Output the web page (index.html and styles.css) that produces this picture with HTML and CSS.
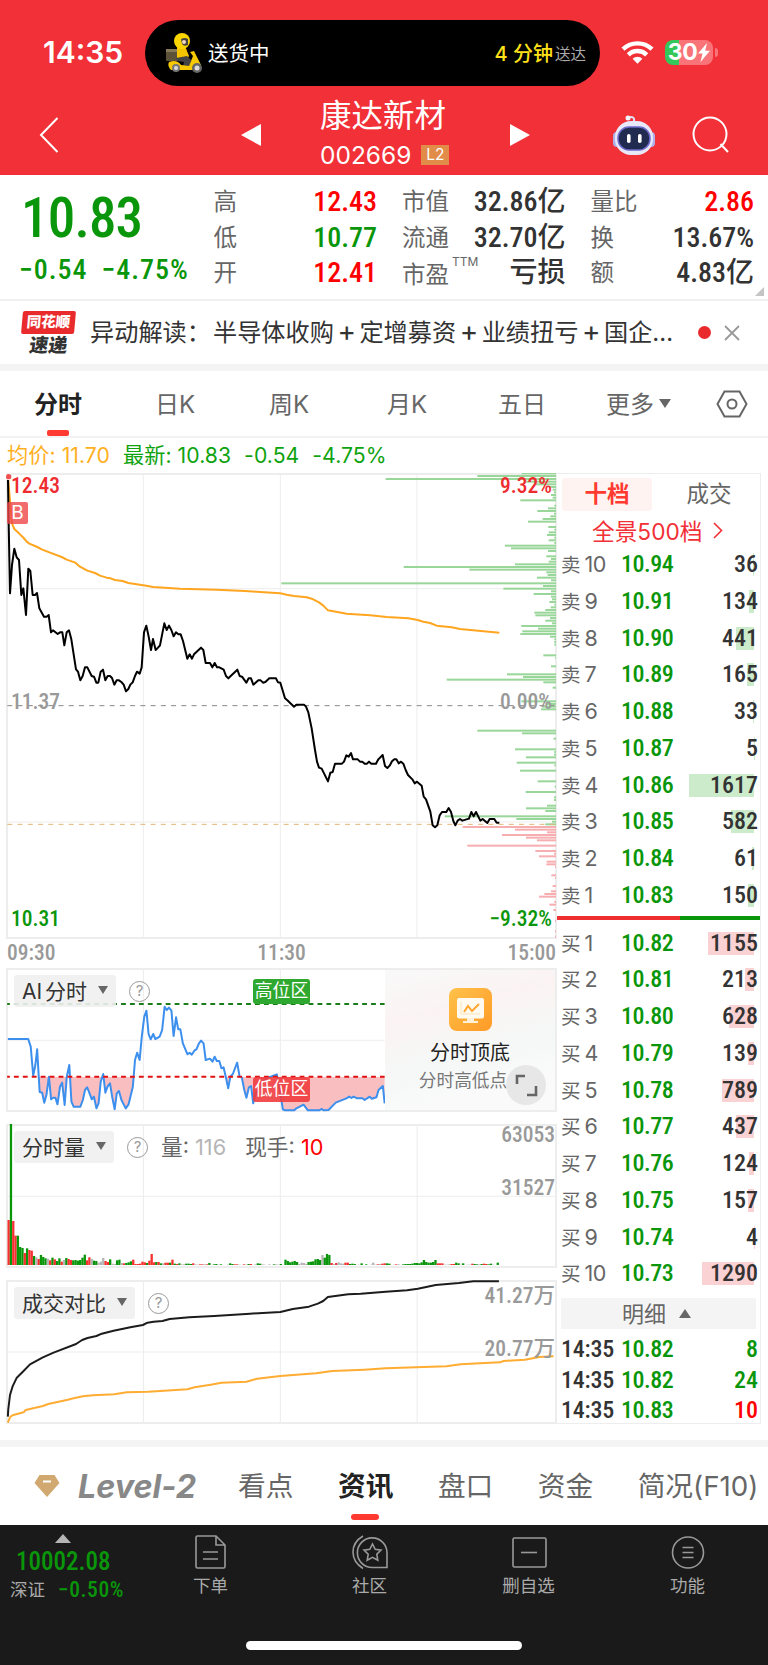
FILE: index.html
```
<!doctype html>
<html lang="zh-CN">
<head>
    <meta charset="UTF-8">
    <meta name="viewport" content="width=device-width, initial-scale=1.0">
    <title>康达新材 002669</title>
    <link rel="stylesheet" href="styles.css">
</head>
<body>

    <header class="header">
        <div class="status">
            <div class="status__time">14:35</div>
            <div class="island">
                <svg class="island__rider" width="38" height="40" viewBox="0 0 38 40">
                    <rect x="1" y="16" width="13" height="12" rx="1" fill="#5c5238"/>
                    <rect x="1" y="16" width="13" height="3" fill="#85795a"/>
                    <path d="M12 14l8-1 4 10-3 5-9-2z" fill="#f5c400"/>
                    <path d="M11 25l11-2 4 4-2 7-6-1 1-4-7-1z" fill="#444"/>
                    <path d="M4 29q8-3 12 3l8 1 4-10-3-4 4-1 7 14-8 5H6q-4-4-2-8z" fill="#f8c800"/>
                    <circle cx="17" cy="8" r="8" fill="#fbd500"/>
                    <path d="M16 6q4-2 7 0v6q-4 2-6-1z" fill="#444"/>
                    <circle cx="19" cy="9" r="2" fill="#f4d9c0"/>
                    <circle cx="11" cy="35" r="4" fill="#777"/>
                    <circle cx="11" cy="35" r="2" fill="#ddd"/>
                    <circle cx="32" cy="35" r="5" fill="#666"/>
                    <circle cx="32" cy="35" r="2.5" fill="#ddd"/>
                </svg>
                <span class="island__state">送货中</span>
                <span class="island__eta">4 分钟</span>
                <span class="island__note">送达</span>
            </div>
            <svg class="status__wifi" width="33" height="24" viewBox="0 0 33 24" fill="none" stroke="#fff" stroke-width="4.4">
                <path d="M2 9.2a21 21 0 0 1 29 0"/>
                <path d="M7.3 14.8a13.2 13.2 0 0 1 18.4 0"/>
                <path d="M11.6 18.7a7.2 7.2 0 0 1 9.8 0L16.5 23.8z" fill="#fff" stroke="none"/>
            </svg>
            <div class="battery">30<svg width="12" height="19" viewBox="0 0 12 19"><path d="M9 0L0 10.5h4.5L2.5 19 12 7.8H7.2z" fill="#fff"/></svg></div>
        </div>
        <div class="nav">
            <svg class="nav__back" width="20" height="36" viewBox="0 0 20 36"><path d="M18.5 1L2 18l16.500 17" fill="none" stroke="#fff" stroke-width="2"/></svg>
            <svg class="nav__prev" width="20" height="22" viewBox="0 0 20 22"><path d="M20 0v22L0 11z" fill="#fff"/></svg>
            <div class="nav__title">
                <div class="nav__name">康达新材</div>
                <div class="nav__code">002669<span class="nav__badge">L2</span></div>
            </div>
            <svg class="nav__next" width="20" height="22" viewBox="0 0 20 22"><path d="M0 0v22l20-11z" fill="#fff"/></svg>
            <svg class="nav__robot" width="44" height="42" viewBox="0 0 44 42">
                <path d="M16 3.500q7-2 6 4" fill="none" stroke="#dfe0f5" stroke-width="2"/>
                <circle cx="16" cy="4" r="2.500" fill="#f3f3ff"/>
                <rect x="1" y="18" width="8" height="15" rx="4" fill="#aeb0ea"/>
                <rect x="35" y="18" width="8" height="15" rx="4" fill="#aeb0ea"/>
                <rect x="3" y="7" width="38" height="34" rx="16" fill="#e8e8f8"/>
                <rect x="6" y="13" width="32" height="23" rx="11" fill="#212b50" stroke="#6d6bcb" stroke-width="1.500"/>
                <rect x="15" y="20" width="3.600" height="9" rx="1.800" fill="#fff"/>
                <rect x="26" y="20" width="3.600" height="9" rx="1.800" fill="#fff"/>
            </svg>
            <svg class="nav__search" width="38" height="38" viewBox="0 0 38 38" fill="none" stroke="#fff" stroke-width="2"><circle cx="18" cy="18" r="16.500"/><path d="M28.500 28l7.500 8"/></svg>
        </div>
    </header>

    <section class="quote">
        <div class="quote__main">
            <div class="quote__price num">10.83</div>
            <div class="quote__change num"><span>−0.54</span><span>−4.75%</span></div>
        </div>
        <div class="quote__col">
            <div class="quote__row"><span>高</span><b class="num red">12.43</b></div>
            <div class="quote__row"><span>低</span><b class="num green">10.77</b></div>
            <div class="quote__row"><span>开</span><b class="num red">12.41</b></div>
        </div>
        <div class="quote__col">
            <div class="quote__row"><span>市值</span><b class="num">32.86亿</b></div>
            <div class="quote__row"><span>流通</span><b class="num">32.70亿</b></div>
            <div class="quote__row"><span class="ttm">市盈<sup>TTM</sup></span><b class="num">亏损</b></div>
        </div>
        <div class="quote__col">
            <div class="quote__row"><span>量比</span><b class="num red">2.86</b></div>
            <div class="quote__row"><span>换</span><b class="num">13.67%</b></div>
            <div class="quote__row"><span>额</span><b class="num">4.83亿</b></div>
        </div>
    </section>

    <section class="news">
        <div class="news__logo"><span>同花顺</span><em>速递</em></div>
        <div class="news__text">异动解读：<i></i>半导体收购<i>+</i>定增募资<i>+</i>业绩扭亏<i>+</i>国企…</div>
        <span class="news__dot"></span>
        <svg width="16" height="16" viewBox="0 0 16 16"><path d="M1 1l14 14M15 1L1 15" stroke="#999" stroke-width="1.800"/></svg>
    </section>

    <nav class="periods">
        <span class="active">分时</span>
        <span>日K</span>
        <span>周K</span>
        <span>月K</span>
        <span>五日</span>
        <span class="more">更多</span>
        <svg width="32" height="28" viewBox="0 0 32 28" fill="none" stroke="#666" stroke-width="2"><path d="M8.500 1.500h15L30.500 14l-7 12.500h-15L1.500 14z"/><circle cx="16" cy="14" r="4.500"/></svg>
    </nav>

    <div class="legend">
        <span class="orange">均价: 11.70</span>
        <span>最新: 10.83</span>
        <span>-0.54</span>
        <span>-4.75%</span>
    </div>

    <main class="board">
        <div class="charts">
            <div class="panel panel-price">
                <svg class="plot" viewBox="18 39 1653 1395">
                    <g class="grid"><path d="M430 39v1395M841 39v1395M1251 39v1395M18 386h1653M18 1086h1653"/></g>
                    <g id="depth"></g>
                    <path d="M22 737H1668" stroke="#888" stroke-width="3" stroke-dasharray="15 15.700"/>
                    <path d="M22 1093H1668" stroke="#e3b679" stroke-width="3" stroke-dasharray="15 15.700"/>
                    <polyline class="line" stroke="#ffa51f" points="25,60 28,100 36,190 43,207 57,220 71,234 80,245 88,251 112,261 125,268 150,278 185,291 200,299 226,308 240,320 262,332 285,339 300,347 320,353 332,355 345,360 368,363 385,369 430,376 460,381 540,386 650,389 735,393 780,396 841,400 860,404 882,408 920,412 935,416 957,427 970,437 984,451 1000,454 1040,461 1110,466 1160,471 1225,475 1253,480 1270,485 1290,489 1310,497 1355,502 1380,507 1498,518"/>
                    <polyline class="line" stroke="#000" points="24,60 26,190 30,400 36,315 43,266 50,292 57,300 64,405 70,385 78,465 85,326 91,333 98,405 105,405 111,399 118,445 132,470 140,470 146,465 153,517 159,511 173,522 180,517 187,517 193,556 200,517 207,511 214,538 228,628 234,635 241,661 248,648 255,622 262,622 275,648 282,650 289,668 295,668 302,635 309,629 316,661 323,648 330,648 336,654 343,674 350,661 357,661 364,666 371,674 378,694 385,687 391,674 398,667 405,648 411,635 419,641 425,622 432,517 439,497 446,530 453,570 459,537 467,570 474,563 480,556 487,520 493,490 500,510 507,497 514,510 521,529 528,517 535,523 542,523 549,543 562,596 569,583 576,596 582,583 603,563 610,570 617,609 630,609 637,622 644,609 651,622 658,622 671,629 678,648 685,655 712,629 719,648 726,650 739,668 746,655 753,655 760,674 775,661 782,661 789,668 796,666 808,655 828,655 834,667 841,668 855,715 862,721 882,740 889,734 912,734 918,740 925,757 935,805 945,870 951,905 957,923 965,926 984,964 991,938 998,936 1005,911 1026,911 1032,905 1039,886 1046,890 1053,879 1059,898 1073,898 1080,905 1087,905 1094,911 1101,911 1107,905 1114,911 1128,911 1135,898 1148,885 1155,918 1162,924 1169,917 1176,904 1183,898 1189,898 1196,910 1203,905 1210,911 1217,930 1224,945 1237,958 1244,970 1251,965 1265,977 1271,1010 1278,1018 1291,1055 1298,1096 1305,1102 1312,1096 1319,1066 1326,1056 1339,1056 1346,1044 1353,1056 1360,1083 1366,1096 1373,1082 1380,1077 1387,1082 1407,1076 1414,1056 1421,1069 1428,1056 1441,1082 1448,1077 1462,1089 1469,1077 1483,1077 1490,1088 1498,1088"/>
                    <circle cx="26" cy="50" r="8" fill="#f05050"/>
                </svg>
                <span class="mark">B</span>
                <span class="axis axis-tl red2">12.43</span>
                <span class="axis axis-tr red2">9.32%</span>
                <span class="axis axis-ml">11.37</span>
                <span class="axis axis-mr">0.00%</span>
                <span class="axis axis-bl green">10.31</span>
                <span class="axis axis-br green">−9.32%</span>
            </div>
            <div class="times"><span>09:30</span><span>11:30</span><span>15:00</span></div>

            <div class="panel">
                <svg class="plot" viewBox="16.8 114 1542.800 432" preserveAspectRatio="none">
                    <g class="grid"><path d="M401.500 114v432M785 114v432M16 331h1061"/></g>
                    <clipPath id="low"><rect x="16" y="440" width="1062" height="106"/></clipPath>
                    <polygon id="aiArea" clip-path="url(#low)" fill="#e8282d" fill-opacity=".3"/>
                    <polyline id="aiLine" class="line" stroke="#3d8fee" points="22,327 79,327 86,350 93,437 99,405 104,358 111,486 118,488 124,518 130,495 137,440 143,508 149,503 155,503 161,523 168,470 174,458 181,525 187,440 194,405 200,515 206,530 225,530 232,510 238,480 244,472 250,488 257,508 263,500 270,535 276,520 282,455 289,432 295,488 301,470 308,460 314,500 321,538 327,490 333,483 340,510 352,535 360,523 372,470 378,390 384,368 391,390 397,320 404,260 410,242 416,312 422,328 429,312 435,327 447,320 454,300 461,230 467,240 473,233 480,242 486,318 493,262 499,298 505,298 512,340 525,373 531,368 537,374 544,362 550,358 557,340 563,332 570,340 576,390 588,386 595,395 601,380 607,393 614,393 620,415 626,412 633,445 639,475 645,440 652,432 664,398 671,440 677,442 684,480 690,503 697,472 703,468 709,520 716,490 730,470 745,445 775,433 782,470 792,538 798,541 824,541 830,535 850,524 862,541 894,541 900,537 907,541 920,540 940,518 970,505 978,500 984,504 990,500 1000,505 1015,505 1021,510 1035,500 1041,506 1054,502 1060,480 1072,468 1077,520"/>
                    <path d="M20 222H1077" stroke="#1a7d1a" stroke-width="6" stroke-dasharray="13.500 11.500" stroke-dashoffset="6"/>
                    <path d="M20 440H1077" stroke="#e01010" stroke-width="6" stroke-dasharray="13.500 11.500" stroke-dashoffset="6"/>
                </svg>
                <div class="picker"><span class="select">AI 分时</span><span class="help">?</span></div>
                <span class="zone zone-high">高位区</span>
                <span class="zone zone-low">低位区</span>
                <div class="promo">
                    <svg width="43" height="43" viewBox="0 0 43 43">
                        <defs><linearGradient id="og" x1="0" y1="0" x2="1" y2="1"><stop offset="0" stop-color="#ffc24a"/><stop offset="1" stop-color="#ff9a26"/></linearGradient></defs>
                        <rect width="43" height="43" rx="8" fill="url(#og)"/>
                        <rect x="8" y="10" width="27" height="20.500" rx="2" fill="#fffaf0"/>
                        <path d="M18 30h7v3h4v2H14v-2h4z" fill="#fff0d8"/>
                        <path d="M12 14v12h19" fill="none" stroke="#fbe3bd"/>
                        <path d="M15 24l4-6 4 5 7-7" fill="none" stroke="#ffa62e" stroke-width="2"/>
                    </svg>
                    <div class="promo__title">分时顶底</div>
                    <div class="promo__text">分时高低点</div>
                    <span class="promo__full"><svg width="24" height="24" viewBox="0 0 24 24" fill="none" stroke="#666" stroke-width="2.600"><path d="M3 11V3h8"/><path d="M22 13v9h-9"/></svg></span>
                </div>
            </div>

            <div class="panel">
                <svg class="plot" viewBox="16.8 42 1542.800 432" preserveAspectRatio="none">
                    <g class="grid"><path d="M401.500 42v432M785 42v432M1168 42v432M16 259h1543"/></g>
                    <g id="volume"></g>
                </svg>
                <div class="picker"><span class="select">分时量</span><span class="help">?</span><span class="picker__text">量: <i>116</i></span><span class="picker__text">现手: <b>10</b></span></div>
                <span class="axis axis-r1">63053</span>
                <span class="axis axis-r2">31527</span>
            </div>

            <div class="panel">
                <svg class="plot" viewBox="16.8 30 1542.800 432" preserveAspectRatio="none">
                    <g class="grid"><path d="M401.500 30v432M785 30v432M1168 30v432M16 246h1543"/></g>
                    <polyline class="line" stroke="#1c1c1c" points="22,440 23,420 28,375 35,350 47,323 66,303 84,283 120,262 150,248 213,222 230,210 245,204 270,198 285,191 318,182 355,174 365,172 400,165 413,158 430,155 455,153 475,147 530,142 600,138 700,131 785,126 820,117 865,110 890,101 905,93 918,81 975,73 1010,71 1080,65 1140,61 1170,56 1220,45 1285,39 1325,34 1397,34"/>
                    <polyline class="line" stroke="#ffac33" points="22,458 28,442 35,436 66,427 72,420 120,408 135,402 190,389 200,386 232,379 260,376 320,373 355,367 415,365 525,358 545,352 590,344 620,338 690,335 720,326 785,318 885,310 930,303 1020,299 1080,295 1165,292 1250,289 1290,283 1400,277 1410,273 1470,269 1510,261 1550,259"/>
                </svg>
                <div class="picker"><span class="select">成交对比</span><span class="help">?</span></div>
                <span class="axis axis-r1 cjk">41.27万</span>
                <span class="axis axis-r2 cjk">20.77万</span>
            </div>
        </div>

        <aside class="book">
            <div class="book__tabs"><span class="active">十档</span><span>成交</span></div>
            <div class="book__link">全景500档<svg width="10" height="17" viewBox="0 0 10 17"><path d="M1 1l7.500 7.500L1 16" fill="none" stroke="#f23037" stroke-width="1.600"/></svg></div>
            <div id="sell"></div>
            <div class="book__ratio"></div>
            <div id="buy"></div>
            <div class="book__detail">明细<i></i></div>
            <div class="deal"><span>14:35</span><b>10.82</b><em>8</em></div>
            <div class="deal"><span>14:35</span><b>10.82</b><em>24</em></div>
            <div class="deal"><span>14:35</span><b>10.83</b><em class="red">10</em></div>
        </aside>
    </main>

    <nav class="sections">
        <svg width="26" height="24" viewBox="0 0 26 24"><path d="M5.500 1h15L25.500 9 13 23 .5 9z" fill="#d1a970"/><path d="M9 7.500h8" stroke="#fff" stroke-width="2"/></svg>
        <span class="level">Level-2</span>
        <span>看点</span>
        <span class="active">资讯</span>
        <span>盘口</span>
        <span>资金</span>
        <span>简况(F10)</span>
    </nav>

    <footer class="footer">
        <div class="index">
            <i></i>
            <div class="index__value num">10002.08</div>
            <div class="index__row"><span>深证</span><b class="num">−0.50%</b></div>
        </div>
        <div class="tool">
            <svg width="36" height="36" viewBox="0 0 36 36"><path d="M3 3.500q0-1.500 1.500-1.500H23l9 9v21.500q0 1.500-1.500 1.500h-26Q3 34 3 32.500zM23 2v9h9M10 18h15M10 25h15"/></svg>
            下单
        </div>
        <div class="tool">
            <svg width="36" height="36" viewBox="0 0 36 36"><path d="M35 33.500H20.500a14.800 14.800 0 1 1 14.500-15zM11 2Q1 8 1 18t10 16.500"/><path d="M20.500 10l2.700 5.300 5.800.8-4.200 4.200 1 5.900-5.300-2.800-5.300 2.800 1-5.900-4.200-4.200 5.800-.8z"/></svg>
            社区
        </div>
        <div class="tool">
            <svg width="36" height="36" viewBox="0 0 36 36"><rect x="2" y="4" width="33" height="29" rx="1.500"/><path d="M10 18.500h16"/></svg>
            删自选
        </div>
        <div class="tool">
            <svg width="36" height="36" viewBox="0 0 36 36"><circle cx="18" cy="18.500" r="15.500"/><path d="M12.500 13.500h11M12.500 18.500h11M12.500 23.500h11"/></svg>
            功能
        </div>
        <span class="home"></span>
    </footer>

    <script>
        const SVG = 'http://www.w3.org/2000/svg';

        function rect(parent, x, y, w, h, fill) {
            const el = document.createElementNS(SVG, 'rect');
            el.setAttribute('x', x);
            el.setAttribute('y', y);
            el.setAttribute('width', w);
            el.setAttribute('height', h);
            el.setAttribute('fill', fill);
            parent.appendChild(el);
        }

        // [y, длина]
        const asks = [[40,103],[48,236],[57,511],[65,95],[73,60],[81,20],[89,10],[97,6],[105,15],[113,10],[121,107],[137,5],[145,24],[153,56],[161,6],[169,17],[177,40],[185,84],[201,23],[209,5],[217,22],[225,27],[233,5],[241,22],[249,5],[257,153],[265,135],[273,24],[289,29],[297,15],[305,22],[313,123],[321,457],[329,260],[337,29],[345,25],[353,57],[361,15],[370,824],[378,39],[386,158],[394,15],[402,67],[410,15],[418,12],[426,20],[434,5],[442,16],[450,32],[458,65],[466,62],[474,18],[482,32],[490,12],[498,104],[506,54],[514,101],[522,107],[530,18],[538,5],[546,5],[554,5],[586,38],[594,2],[619,15],[643,147],[651,99],[659,328],[667,38],[683,10],[724,104],[732,30],[740,40],[748,45],[812,236],[820,102],[836,7],[868,123],[876,5],[884,6],[892,90],[908,118],[916,5],[932,108],[964,55],[980,4],[996,91],[1012,6],[1020,6],[1037,27],[1045,90],[1053,32],[1069,334],[1077,119],[1085,12],[1093,32]];
        const bids = [[1101,280],[1109,123],[1117,27],[1125,162],[1133,90],[1141,57],[1157,266],[1173,62],[1181,6],[1189,51],[1205,28],[1213,29],[1221,3],[1246,14],[1254,3],[1278,10],[1294,15],[1302,35],[1310,51],[1326,5],[1334,20],[1350,8],[1382,3],[1414,3],[1430,3]];
        const depth = document.querySelector('#depth');
        asks.forEach(([y, w]) => rect(depth, 1668 - w, y - 3, w, 6, '#99d699'));
        bids.forEach(([y, w]) => rect(depth, 1668 - w, y - 3, w, 6, '#f7aeb0'));

        const volume = 'r135 g423 r132 r88 g88 g54 g51 r36 g50 r45 r43 g27 n23 r18 g30 g24 g20 n19 r14 g22 r17 g12 g20 r10 n15 g21 r18 r15 g14 g15 g13 g15 g22 g31 r14 r23 n18 g13 g12 n7 n10 n21 r12 r9 g17 n4 n3 g14 g16 n6 r5 g6 g8 g11 r16 r3 r3 r4 r10 r8 g6 r13 r33 r8 g9 r9 g5 n5 r7 r7 g7 r16 g4 r3 g5 n2 n2 g4 g4 g3 r5 n2 n1 r2 r2 n2 r2 g6 n0 g2 g3 n1 g2 n0 n0 n1 g5 g3 r2 r2 n1 n0 r2 n1 g3 r3 n0 n2 g5 g4 n2 n1 n0 n2 n0 g2 n2 n1 g3 n0 g16 g12 g8 g10 g12 g9 n3 n7 n6 n3 g9 g10 g11 g17 g18 g15 n30 g22 g33 g30 r6 n3 r6 n8 n5 n4 r7 r7 g3 g4 g3 n0 n1 g5 n0 g2 n0 n1 n7 n1 r2 n3 r4 r5 g5 g4 n0 n1 r2 n2 n0 g2 g3 g3 g3 g4 g6 g6 g5 g8 g15 g9 g7 g7 g9 g15 r5 r5 r5 n1 n1 n2 r3 r3 g7 g5 n1 g5 n0 n1 n1 r4 g3 g2 n2 g3 r4 r3 g2 g4 n1 n0 g7'.split(' ');
        const colors = {r: '#f5302f', g: '#0a960a', n: '#b5b5b5'};
        const step = 1376 / volume.length;
        volume.forEach((v, i) => {
            const h = +v.slice(1);
            rect(document.querySelector('#volume'), 21 + i * step, 465 - h, step, h, colors[v[0]]);
        });

        const points = document.querySelector('#aiLine').getAttribute('points');
        document.querySelector('#aiArea').setAttribute('points', points + ' 1077,440 22,440');

        function fill(id, name, rows) {
            document.querySelector(id).innerHTML = rows.map(([n, price, count]) => `
                <div class="order">
                    <span>${name}<i>${n}</i></span><b>${price}</b><em>${count}</em>
                    <u style="width: ${count / 24.9}px"></u>
                </div>`).join('');
        }

        fill('#sell', '卖', [[10, '10.94', 36], [9, '10.91', 134], [8, '10.90', 441], [7, '10.89', 165], [6, '10.88', 33], [5, '10.87', 5], [4, '10.86', 1617], [3, '10.85', 582], [2, '10.84', 61], [1, '10.83', 150]]);
        fill('#buy', '买', [[1, '10.82', 1155], [2, '10.81', 213], [3, '10.80', 628], [4, '10.79', 139], [5, '10.78', 789], [6, '10.77', 437], [7, '10.76', 124], [8, '10.75', 157], [9, '10.74', 4], [10, '10.73', 1290]]);
    </script>
</body>
</html>
```
FILE: styles.css
```
*,*:before,*:after{
    box-sizing: border-box;
}
body{
    margin: 0;
    width: 768px;
    height: 1665px;
    overflow: hidden;
    background: #fff;
    color: #333;
    font-family: 'Inter', 'Noto Sans CJK SC', sans-serif;
    white-space: nowrap;
}
svg{
    display: block;
    flex-shrink: 0;
}
i,em{
    font-style: normal;
}
.num,.axis,.times,.order,.deal{
    font-family: 'Roboto', 'Noto Sans CJK SC', sans-serif;
    font-weight: 480;
    font-stretch: 86%;
}
.red{
    color: #f00;
}
.green{
    color: #0a960a;
}

/* header */
.header{
    height: 175px;
    background: #f23037;
    color: #fff;
}
.status{
    display: flex;
    align-items: center;
    height: 106px;
    padding-left: 43px;
}
.status__time{
    width: 102px;
    margin-top: -2px;
    font-size: 30px;
    font-weight: 600;
}
.island{
    display: flex;
    align-items: center;
    width: 455px;
    height: 66px;
    padding: 0 14px 0 20px;
    border-radius: 33px;
    background: #000;
}
.island__state{
    margin: -2px auto 0 5px;
    font-size: 20.5px;
}
.island__eta{
    margin-top: -2px;
    font-size: 20px;
    font-weight: 500;
    color: #ffe11a;
}
.island__note{
    margin-left: 2px;
    font-size: 15.5px;
    color: #aaa;
}
.status__wifi{
    margin: -2px 11px 0 21px;
}
.battery{
    position: relative;
    display: flex;
    align-items: center;
    justify-content: center;
    gap: 1px;
    width: 48px;
    height: 25px;
    margin-top: -2px;
    border-radius: 8px;
    background: linear-gradient(90deg, #34c759 14px, #f87478 14px);
    font-size: 23px;
    font-weight: 700;
    letter-spacing: -0.5px;
}
.battery:after{
    content: '';
    position: absolute;
    left: 50px;
    top: 8px;
    width: 3px;
    height: 9px;
    border-radius: 0 3px 3px 0;
    background: #f87478;
}
.nav{
    display: flex;
    align-items: center;
    height: 58px;
    padding-left: 39px;
}
.nav__prev{
    margin-left: 182px;
}
.nav__title{
    width: 130px;
    margin-left: 59px;
}
.nav__name{
    font-size: 31.500px;
    line-height: 40px;
    margin-top: -1px;
}
.nav__code{
    display: flex;
    align-items: center;
    height: 38px;
    font-size: 24.500px;
    font-weight: 400;
}
.nav__badge{
    width: 28px;
    height: 20px;
    margin-left: 10px;
    background: #e18c49;
    font-size: 15.500px;
    line-height: 20px;
    text-align: center;
}
.nav__next{
    margin-left: 60px;
}
.nav__robot{
    margin-left: 82px;
}
.nav__search{
    margin-left: 36px;
}

/* quote */
.quote{
    position: relative;
    display: flex;
    height: 126px;
    padding: 8px 14px 0 20px;
    border-bottom: 2px solid #f0f0f0;
}
.quote:after{
    content: '';
    position: absolute;
    right: 4px;
    bottom: 3px;
    border-left: 9px solid transparent;
    border-bottom: 9px solid #c4c4c4;
}
.quote__main{
    width: 194px;
    color: #0a960a;
}
.quote__price{
    margin: 8px 0 0 1px;
    font-size: 55px;
    line-height: 54px;
    letter-spacing: -0.8px;
}
.quote__change{
    display: flex;
    gap: 14px;
    margin: 10px 0 0 -1px;
    font-size: 28px;
    line-height: 30px;
    letter-spacing: 1px;
}
.quote__col{
    width: 164px;
    margin-right: 25px;
}
.quote__col:last-child{
    margin-right: 0;
}
.quote__row{
    display: flex;
    justify-content: space-between;
    height: 35.500px;
    line-height: 37px;
    font-size: 23.500px;
    color: #666;
}
.quote__row b{
    color: #333;
    font-size: 28px;
}
.quote__row b.red{
    color: #f00;
}
.quote__row b.green{
    color: #0a960a;
}
.quote__row .ttm{
    line-height: 42px;
}
.quote__row sup{
    display: inline-block;
    margin-left: 3px;
    font-size: 12px;
    line-height: 10px;
    transform: translateY(-8px);
}

/* news */
.news{
    display: flex;
    align-items: center;
    height: 63px;
    padding-left: 22px;
}
.news__logo{
    width: 53px;
    height: 44px;
    text-align: center;
    font-weight: 900;
}
.news__logo span{
    display: block;
    height: 23px;
    border-radius: 2px;
    background: #e92b2e;
    color: #fff;
    font-size: 14.500px;
    line-height: 21px;
    transform: skewX(-5deg);
}
.news__logo em{
    display: block;
    font-size: 19px;
    line-height: 23px;
    transform: skewX(-8deg);
}
.news__text{
    width: 590px;
    margin: -4px 0 0 15px;
    font-size: 24.200px;
}
.news__text i{
    display: inline-block;
    width: 25.500px;
    text-align: center;
    font-size: 28px;
    line-height: 24px;
}
.news__text i:empty{
    width: 2px;
}
.news__dot{
    width: 13px;
    height: 13px;
    margin: 0 13px 0 18px;
    border-radius: 50%;
    background: #ea2b2e;
}

/* periods */
.periods{
    position: relative;
    display: flex;
    align-items: center;
    height: 74px;
    padding-left: 34px;
    border-top: 7px solid #f4f4f4;
    border-bottom: 2px solid #f3f3f3;
    font-size: 24px;
    color: #666;
}
.periods span{
    margin-top: -3px;
}
.periods .active{
    width: 121px;
    color: #222;
    font-weight: 600;
}
.periods .active:after{
    content: '';
    position: absolute;
    left: 47px;
    bottom: 0;
    width: 22px;
    height: 6px;
    border-radius: 2px;
    background: #ff3a30;
}
.periods span:nth-child(2){ width: 114px; }
.periods span:nth-child(3){ width: 118px; }
.periods span:nth-child(4){ width: 111px; }
.periods span:nth-child(5){ width: 108px; }
.periods .more{
    display: flex;
    align-items: center;
    width: 110px;
}
.periods .more:after{
    content: '';
    margin: 2px 0 0 5px;
    border: 6px solid transparent;
    border-top: 9px solid #666;
    border-bottom: 0;
}
.legend{
    display: flex;
    gap: 13px;
    height: 35px;
    padding-left: 7px;
    font-size: 21.200px;
    line-height: 34px;
    letter-spacing: 0.050px;
    color: #0fa30f;
}
.legend .orange{
    color: #ffb01f;
}

/* charts */
.board{
    display: flex;
    height: 974px;
    padding-left: 6px;
    border-bottom: 7px solid #f4f4f4;
}
.charts{
    width: 551px;
}
.panel{
    position: relative;
    height: 144px;
    margin-bottom: 12px;
    border: 2px solid #ededed;
}
.panel-price{
    height: 466px;
    margin: 0;
}
.plot{
    position: absolute;
    left: -2px;
    top: -2px;
    width: 551px;
    height: 144px;
}
.panel-price .plot{
    height: 465px;
}
.grid{
    fill: none;
    stroke: #ededed;
    stroke-width: 3;
}
.line{
    fill: none;
    stroke-width: 2;
    stroke-linejoin: round;
    vector-effect: non-scaling-stroke;
}
.axis{
    position: absolute;
    font-size: 21.500px;
    line-height: 24px;
    color: #999;
}
.axis.red2{
    color: #ee2c30;
}
.axis.green{
    color: #0a960a;
}
.axis-tl{ left: 3px; top: -1px; }
.axis-tr{ right: 3px; top: -1px; }
.axis-ml{ left: 3px; top: 215px; }
.axis-mr{ right: 3px; top: 215px; }
.axis-bl{ left: 3px; top: 432px; }
.axis-br{ right: 3px; top: 432px; }
.axis-r1{ right: 0; top: -3px; }
.axis-r2{ right: 0; top: 50px; }
.axis-r1.cjk{ top: 2px; }
.axis-r2.cjk{ top: 55px; }
.mark{
    position: absolute;
    left: -1px;
    top: 27px;
    width: 21px;
    height: 22px;
    border-radius: 2px;
    background: rgba(238,70,72,.8);
    color: #fff;
    font-size: 19px;
    line-height: 22px;
    text-align: center;
}
.times{
    display: flex;
    justify-content: space-between;
    height: 29px;
    padding: 0 1px 0 1px;
    font-size: 21.500px;
    line-height: 27px;
    color: #999;
}
.picker{
    position: absolute;
    left: 6px;
    top: 5px;
    display: flex;
    align-items: center;
    height: 32px;
}
.select{
    display: flex;
    align-items: center;
    height: 32px;
    padding: 0 8px 2px 8px;
    border-radius: 3px;
    background: rgba(240,240,240,.9);
    font-size: 21px;
    word-spacing: -3px;
}
.select:after{
    content: '';
    margin-left: 11px;
    border: 5.500px solid transparent;
    border-top: 8px solid #666;
    border-bottom: 0;
}
.help{
    width: 21px;
    height: 21px;
    margin: 0 13px;
    border: 1.500px solid #999;
    border-radius: 50%;
    color: #999;
    font-size: 15px;
    line-height: 18px;
    text-align: center;
}
.picker__text{
    margin: -3px 19px 0 0;
    color: #666;
    font-size: 21.700px;
}
.picker__text i{
    color: #b5b5b5;
}
.picker__text b{
    color: #f00;
    font-weight: 400;
}
.zone{
    position: absolute;
    left: 245px;
    width: 57px;
    height: 25px;
    border-radius: 3px;
    color: #fff;
    font-size: 17.800px;
    line-height: 23px;
    text-align: center;
}
.zone-high{
    top: 9px;
    background: #2ea82e;
}
.zone-low{
    top: 107px;
    background: rgba(240,60,62,.9);
}
.promo{
    position: absolute;
    right: 0;
    top: 0;
    display: flex;
    flex-direction: column;
    align-items: center;
    width: 170px;
    height: 140px;
    padding: 18px 0 0;
    background: linear-gradient(165deg, #f9f8f8 5%, #fbf3f3 30%, #f5f8f7 58%, #fafafa 80%);
}
.promo__title{
    margin: 8px 0 0;
    font-size: 20px;
    line-height: 28px;
    color: #222;
}
.promo__text{
    margin-right: 14px;
    font-size: 17.700px;
    line-height: 27px;
    color: #777;
}
.promo__full{
    position: absolute;
    right: 9px;
    top: 95px;
    display: flex;
    align-items: center;
    justify-content: center;
    width: 40px;
    height: 40px;
    border-radius: 50%;
    background: rgba(228,228,228,.9);
}

/* order book */
.book{
    width: 204px;
    height: 951px;
    border: 1.500px solid #ededed;
    border-left: 0;
}
.book__tabs{
    display: flex;
    gap: 12px;
    padding: 4px 0 0 5px;
    font-size: 22.500px;
    line-height: 32px;
    color: #666;
}
.book__tabs span{
    flex: none;
    width: 90px;
    height: 33px;
    text-align: center;
}
.book__tabs .active{
    border-radius: 3px;
    background: #fff3f2;
    color: #ff3a30;
    font-weight: 700;
}
.book__link{
    display: flex;
    align-items: center;
    gap: 11px;
    height: 36px;
    margin: 1px 0 -2px;
    padding-left: 35px;
    font-size: 22.700px;
    color: #f23037;
}
.order{
    position: relative;
    display: flex;
    height: 36.750px;
    padding: 0 2px 0 4px;
    font-size: 24px;
    line-height: 37px;
    color: #333;
}
.order span{
    width: 60px;
    font-size: 19.500px;
    font-weight: 400;
    color: #666;
}
.order span i{
    margin-left: 4px;
    font-family: 'Inter';
    font-size: 21.500px;
    letter-spacing: -0.5px;
}
.order b,.deal b{
    color: #0a960a;
    font-weight: 500;
    letter-spacing: -0.5px;
}
.order em,.deal em{
    margin-left: auto;
}
.order u{
    position: absolute;
    right: 6px;
    top: 7px;
    height: 23px;
    z-index: -1;
    background: #cbebcb;
}
#buy .order u{
    background: #fbd2d3;
}
.book__ratio{
    height: 4px;
    margin: 2px 0 5px;
    background: linear-gradient(90deg, #ee2e31 123px, #0a960a 123px);
}
.book__detail{
    display: flex;
    align-items: center;
    justify-content: center;
    height: 31px;
    margin: 6px 4px 4px;
    padding: 0 4px 3px 0;
    background: #f4f4f4;
    font-size: 22px;
    color: #666;
}
.book__detail i{
    margin: 2px 0 0 13px;
    border: 6px solid transparent;
    border-bottom: 9px solid #666;
    border-top: 0;
}
.deal{
    display: flex;
    height: 30.500px;
    padding: 0 2px 0 4px;
    font-size: 24px;
    line-height: 32px;
}
.deal span{
    width: 60px;
    letter-spacing: -0.2px;
}
.deal em{
    color: #0a960a;
}
.deal em.red{
    color: #f00;
}

/* bottom */
.sections{
    display: flex;
    align-items: center;
    height: 78px;
    padding-left: 34px;
    font-size: 27.700px;
    color: #666;
}
.sections span{
    position: relative;
    margin-right: 44.500px;
    line-height: 77px;
}
.sections .level{
    margin: 0 42px 0 18px;
    font-size: 32.300px;
    font-style: italic;
    font-weight: 700;
    color: #888;
}
.sections .active{
    color: #222;
    font-weight: 600;
}
.sections .active:after{
    content: '';
    position: absolute;
    left: 13px;
    bottom: 5px;
    width: 28px;
    height: 6px;
    border-radius: 3px;
    background: #ff3a30;
}
.footer{
    position: relative;
    display: flex;
    height: 140px;
    background: #1a1a1a;
    color: #aaa;
}
.index{
    width: 131px;
    padding: 9px 0 0 10px;
}
.index i{
    display: block;
    width: 0;
    margin-left: 45px;
    border: 8px solid transparent;
    border-bottom: 9px solid #b5b5b5;
    border-top: 0;
}
.index__value{
    margin: 4px 0 0 6px;
    font-size: 25px;
    line-height: 29px;
    color: #0a960a;
}
.index__row{
    display: flex;
    gap: 13px;
    font-size: 17.500px;
    line-height: 27px;
}
.index__row b{
    color: #0a960a;
    font-size: 21.500px;
    letter-spacing: 0.600px;
}
.tool{
    display: flex;
    flex-direction: column;
    align-items: center;
    width: 159px;
    padding-top: 9px;
    font-size: 17.500px;
    line-height: 31px;
}
.tool svg{
    fill: none;
    stroke: #999;
    stroke-width: 1.600;
}
.home{
    position: absolute;
    left: 246px;
    bottom: 15px;
    width: 276px;
    height: 9px;
    border-radius: 5px;
    background: #fff;
}
```
